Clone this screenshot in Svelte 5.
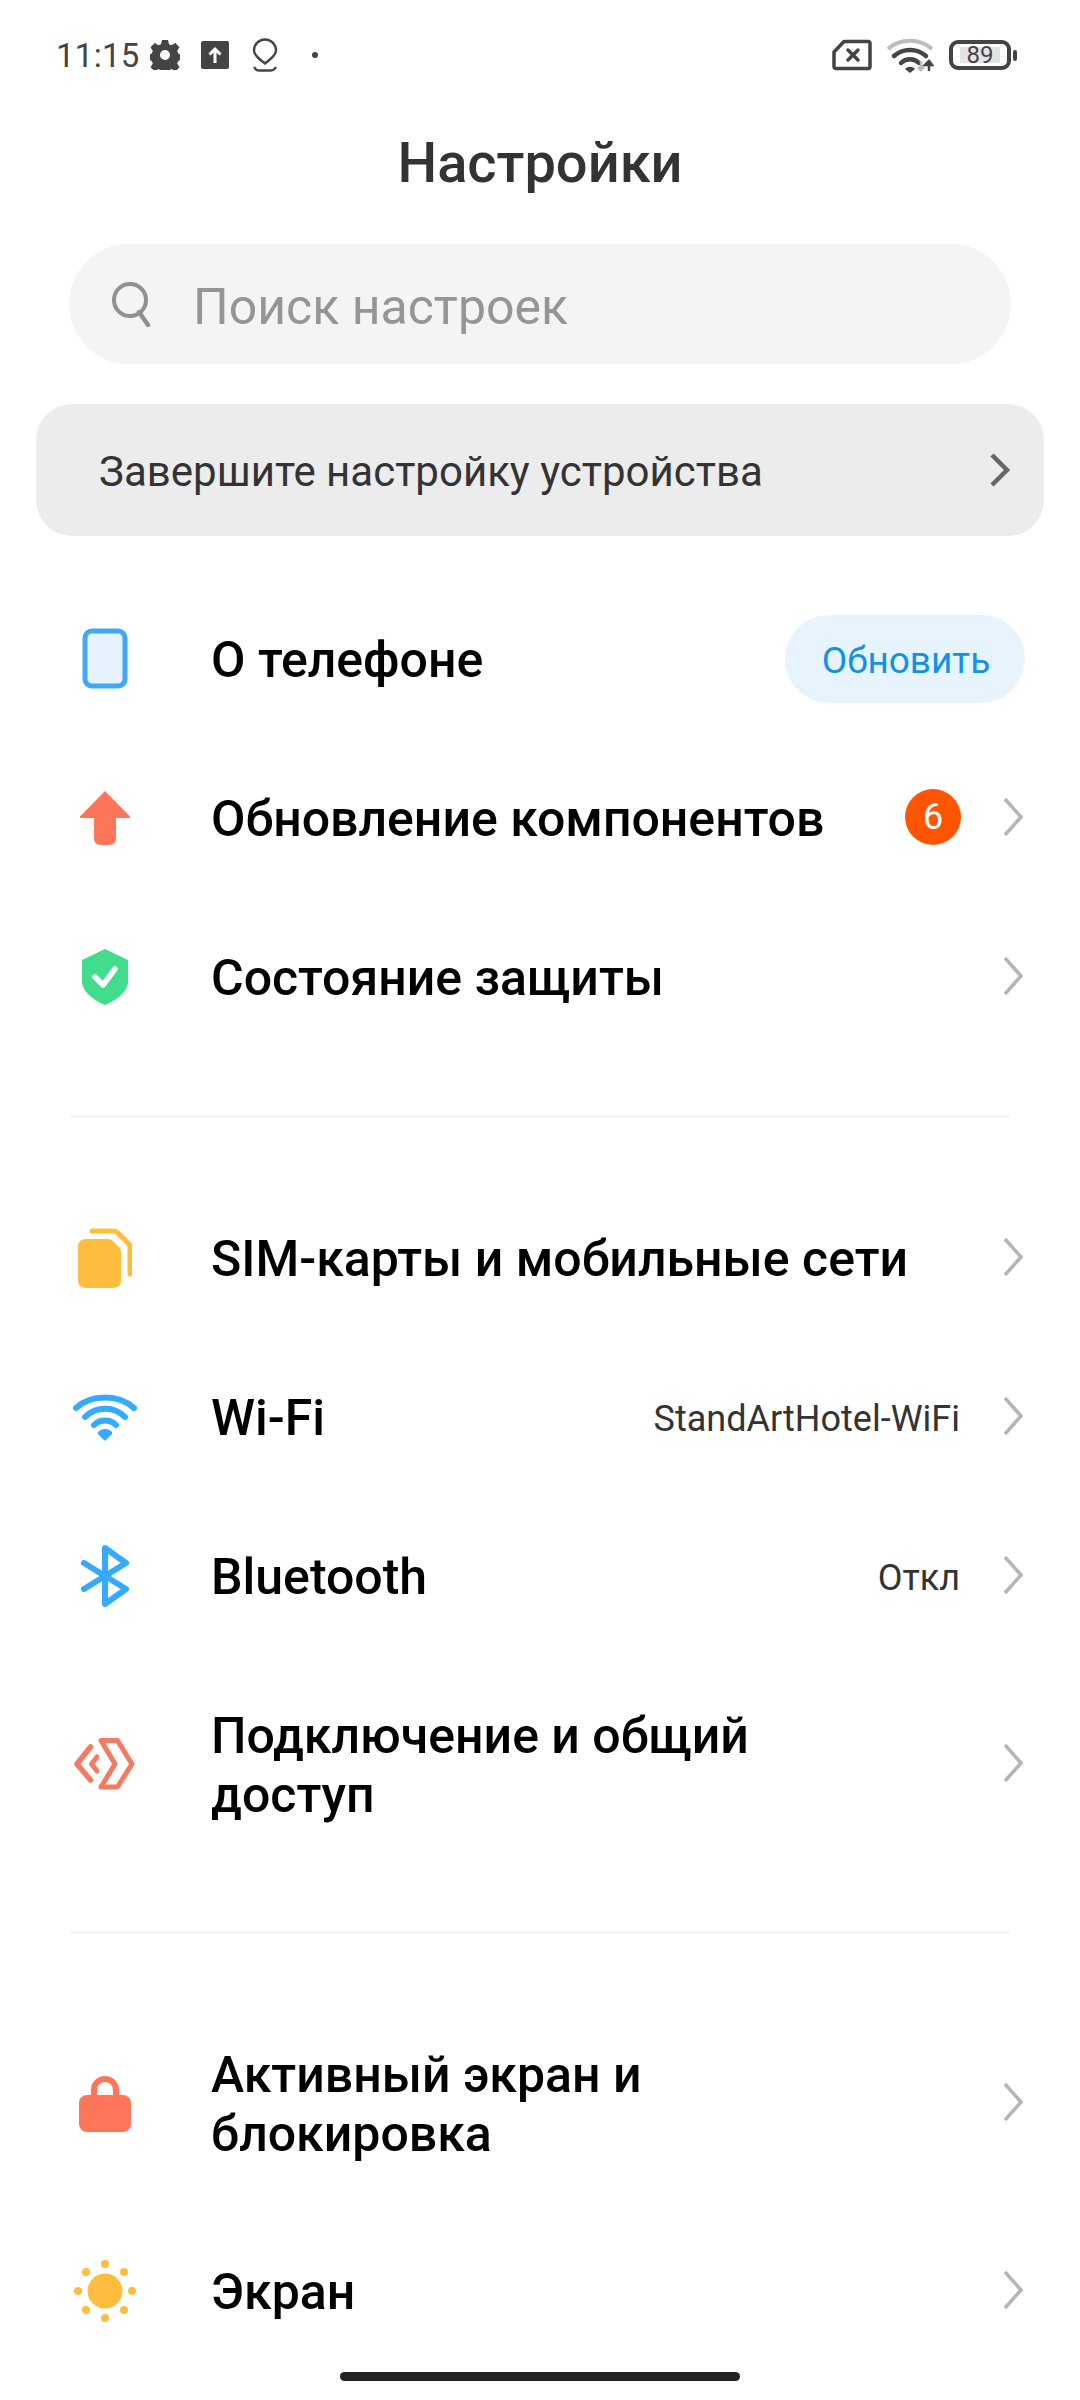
<script>
  const chev = "M2 2 L18 20 L2 38";
</script>

<div class="page">
  <div class="status">
    <div class="st-left">
      <span class="time">11:15</span>
      <svg class="gear" viewBox="0 0 30 30" width="30" height="30"><path fill="#444" fill-rule="evenodd" d="M12 0h6l1 4.200 2.600 1.100 3.700-2.300 4.200 4.200-2.300 3.700 1.100 2.600 1.700 1v5.400l-1.700 1-1.100 2.600 2.300 3.700-4.200 4.200-3.700-2.300-2.600 1.100-1 1.800h-6l-1-1.800-2.600-1.100-3.700 2.300-4.200-4.200 2.300-3.700-1.100-2.600-1.700-1v-5.400l1.700-1 1.100-2.600-2.300-3.700 4.200-4.200 3.700 2.300 2.600-1.100z M15 10a5 5 0 1 0 0 10a5 5 0 1 0 0-10z"/></svg>
      <svg class="up" viewBox="0 0 28 28" width="28" height="28"><rect width="28" height="28" rx="2" fill="#444"/><path d="M14 22V8M8.500 13.500L14 8l5.500 5.500" fill="none" stroke="#fff" stroke-width="3"/></svg>
      <svg class="loc" viewBox="0 0 28 34" width="28" height="34"><path d="M14 1.500A11 11 0 0 1 25 12.500C25 18 18 22 14 25.500C10 22 3 18 3 12.500A11 11 0 0 1 14 1.500Z" fill="none" stroke="#444" stroke-width="2.400"/><path d="M3 29Q5 32.500 8 32.500H20Q23 32.500 25 29" fill="none" stroke="#444" stroke-width="2.400"/></svg>
      <span class="dot"></span>
    </div>
    <div class="st-right">
      <svg class="sim" viewBox="0 0 40 32" width="40" height="32"><path d="M12 2.500H36a2 2 0 0 1 2 2V28a1.500 1.500 0 0 1-1.500 1.500H4a2 2 0 0 1-2-2V13z" fill="none" stroke="#444" stroke-width="3.500" stroke-linejoin="round"/><path d="M16 11l10 10M26 11L16 21" stroke="#444" stroke-width="3.500" stroke-linecap="round"/></svg>
      <svg class="wifi-s" viewBox="0 0 48 36" width="48" height="36"><path d="M2 12c12-11 32-11 44 0" fill="none" stroke="#bdbdbd" stroke-width="4"/><path d="M8 19c9-8 23-8 32 0" fill="none" stroke="#444" stroke-width="4.500" stroke-linecap="round"/><path d="M15 26c5-5 13-5 18 0" fill="none" stroke="#444" stroke-width="4.500" stroke-linecap="round"/><path d="M19 32c3-3 7-3 10 0l-5 4z" fill="#444"/><path d="M35 24v9M32 30l3 3 3-3" fill="none" stroke="#bbb" stroke-width="2.500"/><path d="M43 34v-10M39 28l4-4 3 4z" fill="#444" stroke="#444" stroke-width="2.500"/></svg>
      <div class="batt"><div class="batt-body"><span>89</span></div><i></i></div>
    </div>
  </div>

  <h1>Настройки</h1>

  <div class="search">
    <svg viewBox="0 0 40 46" width="40" height="46"><circle cx="19" cy="19" r="16" fill="none" stroke="#909090" stroke-width="4"/><path d="M28 31l9 13" stroke="#909090" stroke-width="4.500" stroke-linecap="round"/></svg>
    <span class="search-text">Поиск настроек</span>
  </div>

  <div class="setup">
    <span class="setup-text">Завершите настройку устройства</span>
    <svg viewBox="0 0 24 36" width="24" height="36"><path d="M4 3l15 15L4 33" fill="none" stroke="#666" stroke-width="4.500"/></svg>
  </div>

  <div class="group first">
    <div class="row">
      <div class="ic"><svg viewBox="0 0 46 62" width="46" height="62"><rect x="3" y="3" width="40" height="55" rx="7" fill="#e6f3fe" stroke="#3fa9f5" stroke-width="5"/></svg></div>
      <div class="label">О телефоне</div>
      <div class="update"><span>Обновить</span></div>
    </div>
    <div class="row">
      <div class="ic"><svg viewBox="0 0 52 56" width="52" height="56"><path d="M26 1L51 26.500Q51.500 28 50 28H37V48Q37 55 30 55H22Q15 55 15 48V28H2Q.500 28 1 26.500Z" fill="#ff7559"/></svg></div>
      <div class="label">Обновление компонентов</div>
      <div class="badge">6</div>
      <svg class="chev" viewBox="0 0 20 40" width="20" height="40"><path d={chev} fill="none" stroke="#b5b5b5" stroke-width="3.500"/></svg>
    </div>
    <div class="row">
      <div class="ic"><svg viewBox="0 0 48 56" width="48" height="56"><path d="M24 0L47 11V33C47 42 36 51 24 56C12 51 1 42 1 33V11Z" fill="#41dd8c"/><path d="M14 28l8 8L34 20" fill="none" stroke="#fff" stroke-width="5.500" stroke-linecap="round" stroke-linejoin="round"/></svg></div>
      <div class="label">Состояние защиты</div>
      <svg class="chev" viewBox="0 0 20 40" width="20" height="40"><path d={chev} fill="none" stroke="#b5b5b5" stroke-width="3.500"/></svg>
    </div>
  </div>

  <hr />

  <div class="group second">
    <div class="row">
      <div class="ic"><svg viewBox="0 0 54 60" width="54" height="60"><path d="M14 3H36Q38 3 40 5L50 15Q52 17 52 20V46" fill="none" stroke="#ffbd3e" stroke-width="5" stroke-linecap="round"/><path d="M8 11H30Q33 11 35 13L41 19Q43 21 43 24V52Q43 60 35 60H8Q0 60 0 52V19Q0 11 8 11Z" fill="#ffbd3e"/></svg></div>
      <div class="label">SIM-карты и мобильные сети</div>
      <svg class="chev" viewBox="0 0 20 40" width="20" height="40"><path d={chev} fill="none" stroke="#b5b5b5" stroke-width="3.500"/></svg>
    </div>
    <div class="row">
      <div class="ic"><svg viewBox="0 0 64 48" width="64" height="48"><g fill="none" stroke="#35aaff" stroke-width="6" stroke-linecap="round"><path d="M3 15C18 1 46 1 61 15"/><path d="M12 24C23 13 41 13 52 24"/><path d="M21 32C27 26 37 26 43 32"/></g><path d="M25 39C28 35 36 35 39 39Q40 41 38 42L33 47Q32 48 31 47L26 42Q24 41 25 39Z" fill="#35aaff"/></svg></div>
      <div class="label">Wi-Fi</div>
      <div class="val">StandArtHotel-WiFi</div>
      <svg class="chev" viewBox="0 0 20 40" width="20" height="40"><path d={chev} fill="none" stroke="#b5b5b5" stroke-width="3.500"/></svg>
    </div>
    <div class="row">
      <div class="ic"><svg viewBox="0 0 48 62" width="48" height="62"><path d="M3 18L45 44L24 59V3L45 18L3 44" fill="none" stroke="#35aaff" stroke-width="6" stroke-linecap="round" stroke-linejoin="round"/></svg></div>
      <div class="label">Bluetooth</div>
      <div class="val">Откл</div>
      <svg class="chev" viewBox="0 0 20 40" width="20" height="40"><path d={chev} fill="none" stroke="#b5b5b5" stroke-width="3.500"/></svg>
    </div>
    <div class="row tall">
      <div class="ic"><svg viewBox="0 0 62 54" width="62" height="54"><g fill="none" stroke="#f57a62" stroke-linejoin="round" stroke-linecap="round"><path d="M27 3.500H43.500L58 27L43.500 50H27L41 27Z" stroke-width="5"/><path d="M16.500 10L3 27L16.500 43" stroke-width="5.500"/><path d="M23 20L17.500 27L23 34" stroke-width="5"/></g></svg></div>
      <div class="label">Подключение и общий<br />доступ</div>
      <svg class="chev" viewBox="0 0 20 40" width="20" height="40"><path d={chev} fill="none" stroke="#b5b5b5" stroke-width="3.500"/></svg>
    </div>
  </div>

  <hr />

  <div class="group third">
    <div class="row tall">
      <div class="ic"><svg viewBox="0 0 52 58" width="52" height="58"><path d="M15 22V16A11 11 0 0 1 37 16V22" fill="none" stroke="#ff7559" stroke-width="6"/><rect y="21" width="52" height="37" rx="8" fill="#ff7559"/></svg></div>
      <div class="label">Активный экран и<br />блокировка</div>
      <svg class="chev" viewBox="0 0 20 40" width="20" height="40"><path d={chev} fill="none" stroke="#b5b5b5" stroke-width="3.500"/></svg>
    </div>
    <div class="row">
      <div class="ic"><svg viewBox="0 0 62 62" width="62" height="62"><circle cx="31" cy="31" r="17.500" fill="#ffbd3e"/><g fill="#ffbd3e"><circle cx="31" cy="4" r="4"/><circle cx="31" cy="58" r="4"/><circle cx="4" cy="31" r="4"/><circle cx="58" cy="31" r="4"/><circle cx="12" cy="12" r="4"/><circle cx="50" cy="12" r="4"/><circle cx="12" cy="50" r="4"/><circle cx="50" cy="50" r="4"/></g></svg></div>
      <div class="label">Экран</div>
      <svg class="chev" viewBox="0 0 20 40" width="20" height="40"><path d={chev} fill="none" stroke="#b5b5b5" stroke-width="3.500"/></svg>
    </div>
  </div>

  <div class="home"></div>
</div>

<style>
  :global(body) { margin: 0; background: #fff; }
  .page { position: relative; width: 1080px; height: 2400px; overflow: hidden; background: #fff; font-family: Roboto, sans-serif; }
  .status { height: 110px; display: flex; justify-content: space-between; align-items: center; padding: 0 63px 0 56px; box-sizing: border-box; }
  .st-left, .st-right { display: flex; align-items: center; }
  .time { font-size: 33px; color: #444; letter-spacing: 0.3px; }
  .gear { margin-left: 10px; }
  .up { margin-left: 21px; }
  .loc { margin-left: 22px; }
  .dot { width: 6px; height: 6px; border-radius: 50%; background: #444; margin-left: 33px; }
  .sim { margin-right: 14px; }
  .wifi-s { margin-right: 15px; }
  .batt { display: flex; align-items: center; gap: 2px; }
  .batt-body { width: 62px; height: 30px; box-sizing: border-box; border: 4px solid #444; border-radius: 9px; display: flex; align-items: center; justify-content: center; }
  .batt-body span { background: #e3e3e3; font-size: 24px; line-height: 16px; color: #444; padding: 0 7px; height: 16px; display: flex; align-items: center; }
  .batt i { width: 4px; height: 11px; background: #444; border-radius: 2px; }
  h1 { margin: 0; height: 105px; line-height: 107px; text-align: center; font-size: 56px; font-weight: 500; color: #333; }
  .search { margin: 29px 69px 0; height: 120px; border-radius: 60px; background: #f4f4f4; display: flex; align-items: center; padding-left: 42px; gap: 42px; font-size: 50px; color: #959595; }
  .search-text { padding-top: 6px; }
  .setup { margin: 40px 36px 0; height: 132px; border-radius: 36px; background: #ececec; display: flex; align-items: center; justify-content: space-between; padding: 0 32px 0 63px; font-size: 42px; color: #333; }
  .setup-text { padding-top: 3px; }
  .group.first { margin-top: 45px; }
  .row { height: 159px; display: flex; align-items: center; padding: 0 57px 0 0; }
  .row.tall { height: 217px; }
  .ic { width: 211px; display: flex; justify-content: center; margin-bottom: 4px; padding-right: 2px; box-sizing: border-box; flex: none; }
  .label { flex: 1; font-size: 50px; line-height: 59px; font-weight: 500; color: #000; }
  .val { font-size: 36px; color: #333; margin-right: 43px; }
  .update { width: 240px; height: 88px; border-radius: 44px; background: #e7f4fd; color: #1391e6; font-size: 37px; display: flex; align-items: center; justify-content: center; margin-right: -2px; margin-bottom: 3px; }
  .update span { padding: 3px 0 0 2px; }
  .badge { width: 56px; height: 56px; border-radius: 50%; background: #ff5500; color: #fff; font-size: 36px; display: flex; align-items: center; justify-content: center; margin-right: 42px; margin-bottom: 5px; }
  .chev { flex: none; margin-bottom: 6px; }
  hr { border: 0; height: 1px; background: #ebebeb; margin: 58px 70px 63px; }
  .home { position: absolute; left: 340px; bottom: 19px; width: 400px; height: 9px; border-radius: 5px; background: #222; }
</style>
